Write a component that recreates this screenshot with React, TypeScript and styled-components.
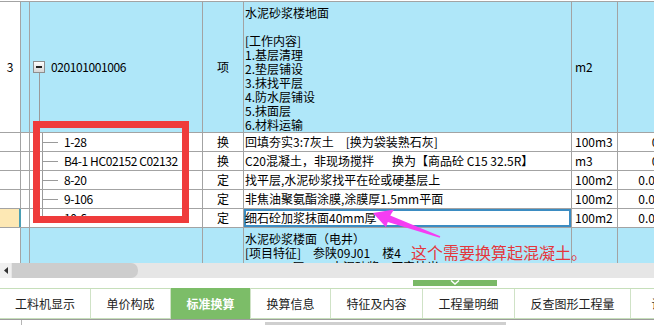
import React from 'react';
import styled, { createGlobalStyle } from 'styled-components';

const GlobalStyle = createGlobalStyle`
  html, body {
    margin: 0;
    padding: 0;
    overflow: hidden;
    background: #fff;
  }
  body {
    font-family: "Noto Sans CJK SC", "Liberation Sans", sans-serif;
    font-size: 12px;
    color: #000;
  }
`;

const LINE = '#a3a3a3';
const BLUE = '#afe7f9';

// the window is wider than the screenshot, the rest is cut off
const Frame = styled.div`
  width: 910px;
  height: 325px;
  display: flex;
  flex-direction: column;
  overflow: hidden;
`;

const GridPane = styled.div`
  position: relative;
  height: 263px;
  padding-top: 1px;
  box-sizing: border-box;
  overflow: hidden;
`;

const Table = styled.div`
  border-top: 1px solid ${LINE};
`;

const Row = styled.div<{ $h: number }>`
  display: grid;
  grid-template-columns: 21px 9px 173px 41px 328px 46px 61px 140px 120px;
  height: ${p => p.$h}px;
  border-bottom: 1px solid ${LINE};
  box-sizing: border-box;
`;

const Cell = styled.div<{ $blue?: boolean }>`
  box-sizing: border-box;
  border-right: 1px solid ${LINE};
  display: flex;
  align-items: center;
  overflow: hidden;
  white-space: pre;
  line-height: 14px;
  background: ${p => (p.$blue ? BLUE : '#fff')};
`;

const NumCell = styled(Cell)<{ $sel?: boolean }>`
  justify-content: center;
  background: ${p => (p.$sel ? '#fde8b4' : '#fff')};
  border-right: ${p => (p.$sel ? '2px solid #4a9fb4' : `1px solid ${LINE}`)};
`;

const CodeCell = styled(Cell)`
  padding-left: 3px;
  letter-spacing: -0.4px;
`;

const TypeCell = styled(Cell)`
  justify-content: center;
`;

const DescCell = styled(Cell)<{ $multi?: boolean; $sel?: boolean }>`
  padding-left: 1px;
  align-items: ${p => (p.$multi ? 'flex-start' : 'center')};
  padding-top: ${p => (p.$multi ? '4px' : '0')};
  white-space: ${p => (p.$multi ? 'pre-line' : 'pre')};
  box-shadow: ${p => (p.$sel ? 'inset 0 0 0 2px #3b8cc2' : 'none')};
`;

const UnitCell = styled(Cell)`
  padding-left: 3px;
`;

const QtyCell = styled(Cell)`
  justify-content: flex-end;
  padding-right: 3px;
`;

const Expander = styled.span`
  position: relative;
  flex: none;
  width: 12px;
  height: 12px;
  box-sizing: border-box;
  margin-right: 6px;
  border: 1px solid #8e8e8e;
  background: linear-gradient(#fdfdfd, #d6d6d6);
  display: inline-flex;
  align-items: center;
  justify-content: center;
  &::before {
    content: '';
    width: 6px;
    height: 2px;
    background: #222;
  }
  &::after {
    content: '';
    position: absolute;
    left: 5px;
    top: 11px;
    width: 1px;
    height: 70px;
    background: #9a9a9a;
  }
`;

const Branch = styled.svg`
  flex: none;
  margin-right: 6px;
`;

const Highlight = styled.div`
  position: absolute;
  left: 33px;
  top: 121px;
  width: 156px;
  height: 102px;
  box-sizing: border-box;
  border: 7px solid #ef3b3b;
`;

const Arrow = styled.svg`
  position: absolute;
  left: 365px;
  top: 203px;
`;

const Note = styled.div`
  position: absolute;
  left: 411px;
  top: 243px;
  font-size: 16px;
  line-height: 18px;
  color: #e4373d;
  white-space: nowrap;
`;

const HScroll = styled.div`
  display: flex;
  height: 15px;
  background: #e6e6e6;
`;

const ScrollArrow = styled.div`
  width: 11px;
  display: flex;
  align-items: center;
  justify-content: center;
  background: #f0f0f0;
`;

const ScrollThumb = styled.div`
  width: 126px;
  margin-left: 1px;
  background: #cdcdcd;
  border-radius: 0 7px 7px 0;
`;

const Splitter = styled.div`
  height: 10px;
  display: flex;
  justify-content: center;
  padding-top: 2px;
  box-sizing: border-box;
`;

const Handle = styled.div`
  width: 84px;
  height: 6px;
  background: #79b965;
  display: flex;
  justify-content: center;
`;

const TabBar = styled.div`
  display: flex;
  height: 31px;
  box-sizing: border-box;
  border-top: 1px solid #c6dfba;
  border-bottom: 1px solid #c6dfba;
`;

const Tab = styled.div<{ $w: number; $active?: boolean }>`
  flex: none;
  width: ${p => p.$w}px;
  box-sizing: border-box;
  border-right: 1px solid #cfe2c6;
  margin: ${p => (p.$active ? '-1px 0' : '0')};
  display: flex;
  align-items: center;
  justify-content: center;
  font-size: 12px;
  color: ${p => (p.$active ? '#fff' : '#222')};
  font-weight: ${p => (p.$active ? 'bold' : 'normal')};
  background: ${p => (p.$active ? '#7cbd68' : '#fff')};
`;

const BottomStrip = styled.div`
  flex: 1;
  display: grid;
  grid-template-columns: 22px 243px 241px 1fr;
  border-top: 1px solid #9c9c9c;
`;

const StripCell = styled.div<{ $thumb?: boolean; $edge?: boolean }>`
  border-right: ${p => (p.$edge ? '1px solid #b5b5b5' : 'none')};
  margin-top: ${p => (p.$thumb ? '2px' : '0')};
  background: ${p => (p.$thumb ? '#cfcfcf' : '#fff')};
`;

type Child = { code: string; type: string; desc: string; unit: string; qty: string; sel?: boolean };

const children: Child[] = [
  { code: '1-28', type: '换', desc: '回填夯实3:7灰土\u3000[换为袋装熟石灰]', unit: '100m3', qty: '0.12' },
  { code: 'B4-1 HC02152 C02132', type: '换', desc: 'C20混凝土，非现场搅拌\u3000\u2002换为【商品砼 C15 32.5R】', unit: 'm3', qty: '0.91' },
  { code: '8-20', type: '定', desc: '找平层,水泥砂浆找平在砼或硬基层上', unit: '100m2', qty: '0.0124' },
  { code: '9-106', type: '定', desc: '非焦油聚氨酯涂膜,涂膜厚1.5mm平面', unit: '100m2', qty: '0.0124' },
  { code: '10-6', type: '定', desc: '细石砼加浆抹面40mm厚', unit: '100m2', qty: '0.0124', sel: true },
];

const tabs = [
  { label: '工料机显示', w: 91 },
  { label: '单价构成', w: 80 },
  { label: '标准换算', w: 80, active: true },
  { label: '换算信息', w: 80 },
  { label: '特征及内容', w: 92 },
  { label: '工程量明细', w: 92 },
  { label: '反查图形工程量', w: 116 },
  { label: '说明信息', w: 90 },
  { label: '组价方案', w: 90 },
];

const ItemRow = ({ num, code, desc, unit }: { num?: string; code?: string; desc: string; unit?: string }) => (
  <Row $h={131}>
    <NumCell>{num}</NumCell>
    <Cell $blue />
    <CodeCell $blue>
      {code && <Expander />}
      {code}
    </CodeCell>
    <TypeCell $blue>{code ? '项' : ''}</TypeCell>
    <DescCell $blue $multi>{desc}</DescCell>
    <UnitCell $blue>{unit}</UnitCell>
    <QtyCell $blue />
    <Cell $blue />
    <Cell $blue />
  </Row>
);

const ChildRow = ({ c, last }: { c: Child; last: boolean }) => (
  <Row $h={19}>
    <NumCell $sel={c.sel} />
    <Cell />
    <CodeCell>
      <Branch width="25" height="18" viewBox="0 0 25 18">
        <line x1="9.5" y1="0" x2="9.5" y2={last ? 9.5 : 18} stroke="#9a9a9a" />
        <line x1="10" y1="9.5" x2="25" y2="9.5" stroke="#9a9a9a" />
      </Branch>
      {c.code}
    </CodeCell>
    <TypeCell>{c.type}</TypeCell>
    <DescCell $sel={c.sel}>{c.desc}</DescCell>
    <UnitCell>{c.unit}</UnitCell>
    <QtyCell>{c.qty}</QtyCell>
    <Cell />
    <Cell />
  </Row>
);

const App = () => {
  return (
    <React.Fragment>
      <GlobalStyle />
      <Frame>
        <GridPane>
          <Table>
            <ItemRow
              num="3"
              code="020101001006"
              desc={'水泥砂浆楼地面\n\n[工作内容]\n1.基层清理\n2.垫层铺设\n3.抹找平层\n4.防水层铺设\n5.抹面层\n6.材料运输'}
              unit="m2"
            />
            {children.map((c, i) => (
              <ChildRow key={c.code} c={c} last={i === children.length - 1} />
            ))}
            {/* next item: only the top of its description is in view */}
            <ItemRow
              desc={'水泥砂浆楼面（电井）\n[项目特征]\u3000参陕09J01\u3000楼4\n\u3000\u30001.20厚1:2.5水泥砂浆，压实抹光'}
            />
          </Table>
          <Highlight />
          <Arrow width="80" height="40" viewBox="0 0 80 40">
            <polygon
              points="8,10 29,6.5 25.2,12.4 75.3,33.2 74.7,34.8 22.8,19 21,24.2"
              fill="#f53df3"
            />
          </Arrow>
          <Note>这个需要换算起混凝土。</Note>
        </GridPane>
        <HScroll>
          <ScrollArrow>
            <svg width="4" height="7" viewBox="0 0 4 7">
              <polygon points="4,0 0,3.5 4,7" fill="#333" />
            </svg>
          </ScrollArrow>
          <ScrollThumb />
        </HScroll>
        <Splitter>
          <Handle>
            <svg width="10" height="5" viewBox="0 0 10 5">
              <polyline points="1,0.5 5,4 9,0.5" fill="none" stroke="#fff" strokeWidth="1.5" />
            </svg>
          </Handle>
        </Splitter>
        <TabBar>
          {tabs.map(t => (
            <Tab key={t.label} $w={t.w} $active={t.active}>
              {t.label}
            </Tab>
          ))}
        </TabBar>
        <BottomStrip>
          <StripCell $edge />
          <StripCell />
          <StripCell $thumb />
          <StripCell />
        </BottomStrip>
      </Frame>
    </React.Fragment>
  );
};

export default App;
